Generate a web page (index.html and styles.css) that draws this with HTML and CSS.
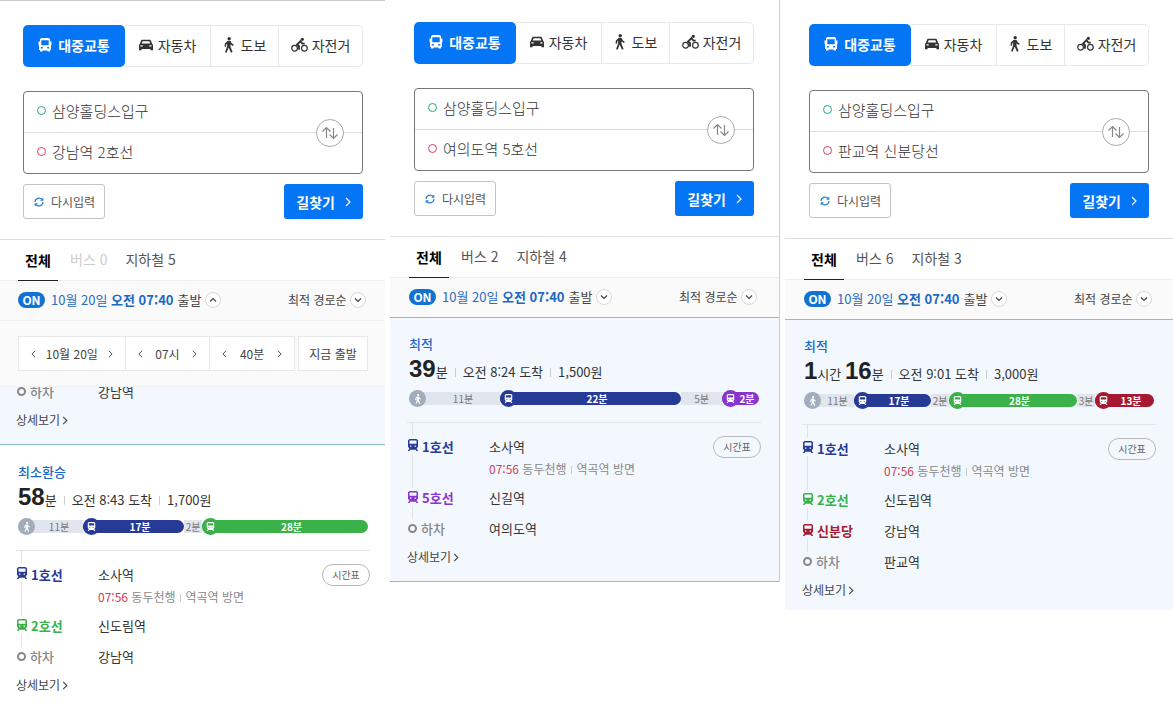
FILE: index.html
```html
<!DOCTYPE html>
<html lang="ko">
<head>
<meta charset="utf-8">
<meta name="viewport" content="width=device-width, initial-scale=1">
<title>길찾기</title>
<link rel="stylesheet" href="styles.css">
</head>
<body>
<svg class="sprite" aria-hidden="true">
  <symbol id="bus" viewBox="0 0 14 14"><path fill-rule="evenodd" d="M3.500 0h7L12 1v2.500h1.500V7H13v5h-1v1.500H9.500V12.500h-5v1H2V12H1V7H.5V3.500H2V1zM3.300 2.300V7.300h7.400V2.300zM2.800 9v1.500h2V9zm6.400 0v1.500h2V9z"/></symbol>
  <symbol id="car" viewBox="0 0 16 14"><path fill-rule="evenodd" d="M4 1h8c1 0 1.500.4 1.800 1.300L15 5.500c.7.500 1 1 1 2V13h-3v-1.500H3V13H0V7.500c0-1 .3-1.500 1-2l1.200-3.200C2.500 1.400 3 1 4 1zm.2 1.600L3.100 5.400h9.800l-1.100-2.800zM1.600 7.300v1.500h2.600V7.300zm10.200 0v1.500h2.600V7.300z"/></symbol>
  <symbol id="walk" viewBox="0 0 12 16"><circle cx="6.200" cy="1.700" r="1.700"/><path d="M4.500 4h3l1.200 2.300 2.100 1.400-.8 1.200-2.400-1.500-.2 2 2.200 5.600-1.600.8L5.600 10.600 3.700 15.700l-1.600-.7 2-5.400.1-3.100-.9.900-.3 2.300-1.500-.2.400-3z"/></symbol>
  <symbol id="bike" viewBox="0 0 18 16"><g fill="none" stroke="currentColor" stroke-width="1.300"><circle cx="3.800" cy="11.500" r="3"/><circle cx="14.200" cy="11.500" r="3"/><path d="M8.500 13V9.300L6.500 7.400 10 4l2 2.500h2.500" stroke-width="2"/></g><circle cx="12" cy="2" r="1.700"/></symbol>
  <symbol id="train" viewBox="0 0 12 12"><path fill-rule="evenodd" d="M2.500 0h7L11 1.200v6.600L9.800 9.200h-.3L11.200 12H9.500l-.8-1.300H3.300L2.500 12H.8l1.700-2.800h-.3L1 7.800V1.200zM2.500 1.500v3.300h7V1.500zM3 6.600v1.200h1.400V6.600zm4.600 0v1.200H9V6.600z"/></symbol>
  <symbol id="swap" viewBox="0 0 18 14"><path fill="none" stroke="currentColor" stroke-width="1.200" d="M5.500 12V1.500M1.500 5.500l4-4 4 4M12.500 2v10.500M8.500 8.500l4 4 4-4"/></symbol>
  <symbol id="refresh" viewBox="0 0 10 10"><path fill="none" stroke="currentColor" stroke-width="1.200" d="M1 5a4 4 0 0 1 7-2.500M9 5a4 4 0 0 1-7 2.500"/><path d="M9.300.5v3.200H6.100zM.7 9.500V6.300h3.200z"/></symbol>
  <symbol id="right" viewBox="0 0 6 10"><path fill="none" stroke="currentColor" stroke-width="1.200" d="M1 1l4 4-4 4"/></symbol>
  <symbol id="left" viewBox="0 0 6 10"><path fill="none" stroke="currentColor" stroke-width="1.200" d="M5 1L1 5l4 4"/></symbol>
  <symbol id="down" viewBox="0 0 16 16"><circle cx="8" cy="8" r="7.500" fill="#fff" stroke="#d8d8d8"/><path fill="none" stroke="currentColor" stroke-width="1.200" d="M5 6.500l3 3 3-3"/></symbol>
  <symbol id="up" viewBox="0 0 16 16"><circle cx="8" cy="8" r="7.500" fill="#fff" stroke="#d8d8d8"/><path fill="none" stroke="currentColor" stroke-width="1.200" d="M5 9.500l3-3 3 3"/></symbol>
</svg>
<main class="page">

<section class="panel panel-first">
  <form class="search">
    <nav class="modes">
      <button type="button" class="mode mode-transit"><svg class="i14"><use href="#bus"/></svg>대중교통</button>
      <button type="button" class="mode mode-car"><svg class="i14"><use href="#car"/></svg>자동차</button>
      <button type="button" class="mode mode-walk"><svg class="i-walk"><use href="#walk"/></svg>도보</button>
      <button type="button" class="mode mode-bike"><svg class="i-bike"><use href="#bike"/></svg>자전거</button>
    </nav>
    <div class="places">
      <label class="place from"><i class="dot"></i><input aria-label="출발지" value="삼양홀딩스입구"></label>
      <label class="place to"><i class="dot"></i><input aria-label="도착지" value="강남역 2호선"></label>
      <button type="button" class="swap" aria-label="출발 도착 바꾸기"><svg><use href="#swap"/></svg></button>
    </div>
    <div class="actions">
      <button type="reset" class="reset"><svg><use href="#refresh"/></svg>다시입력</button>
      <button type="button" class="go">길찾기<svg><use href="#right"/></svg></button>
    </div>
  </form>
  <nav class="tabs"><button class="tab on">전체</button><button class="tab none" disabled>버스 0</button><button class="tab">지하철 5</button></nav>
  <div class="options">
    <button class="when"><span class="pill">ON</span><span class="date">10월 20일 <b>오전 07:40</b></span><span>출발</span><svg><use href="#up"/></svg></button>
    <label class="sort"><select aria-label="정렬"><option>최적 경로순</option></select><svg><use href="#down"/></svg></label>
  </div>
  <div class="picker">
    <div class="fields">
      <div class="field"><button aria-label="이전 날"><svg><use href="#left"/></svg></button><span>10월 20일</span><button aria-label="다음 날"><svg><use href="#right"/></svg></button></div>
      <div class="field"><button aria-label="이전 시"><svg><use href="#left"/></svg></button><span>07시</span><button aria-label="다음 시"><svg><use href="#right"/></svg></button></div>
      <div class="field"><button aria-label="이전 분"><svg><use href="#left"/></svg></button><span>40분</span><button aria-label="다음 분"><svg><use href="#right"/></svg></button></div>
    </div>
    <button class="now">지금 출발</button>
  </div>
  <article class="card chosen scrolled">
    <ul class="steps">
      <li class="step off"><div class="rail"><i class="stop"></i></div><b class="line">하차</b><div class="station"><span>강남역</span></div></li>
    </ul>
    <a class="detail" href="#">상세보기<svg><use href="#right"/></svg></a>
  </article>
  <article class="card">
    <h2 class="kind">최소환승</h2>
    <p class="sum"><span class="time"><b>58</b>분</span><span class="fact">오전 8:43 도착</span><span class="fact">1,700원</span></p>
    <div class="bar">
      <span class="seg foot" style="flex-grow:65"><i><svg><use href="#walk"/></svg></i><em>11분</em></span>
      <span class="seg ride l1" style="flex-grow:101"><i><svg><use href="#train"/></svg></i><em>17분</em></span>
      <span class="seg foot" style="flex-grow:18"><em>2분</em></span>
      <span class="seg ride l2" style="flex-grow:166"><i><svg><use href="#train"/></svg></i><em>28분</em></span>
    </div>
    <ul class="steps ruled">
      <li class="step l1"><div class="rail"><svg><use href="#train"/></svg></div><b class="line">1호선</b><div class="station"><span>소사역</span><p class="next"><time>07:56</time> 동두천행<span class="way">역곡역 방면</span></p></div><button class="table">시간표</button></li>
      <li class="step l2"><div class="rail"><svg><use href="#train"/></svg></div><b class="line">2호선</b><div class="station"><span>신도림역</span></div></li>
      <li class="step off"><div class="rail"><i class="stop"></i></div><b class="line">하차</b><div class="station"><span>강남역</span></div></li>
    </ul>
    <a class="detail" href="#">상세보기<svg><use href="#right"/></svg></a>
  </article>
</section>

<section class="panel panel-second">
  <form class="search">
    <nav class="modes">
      <button type="button" class="mode mode-transit"><svg class="i14"><use href="#bus"/></svg>대중교통</button>
      <button type="button" class="mode mode-car"><svg class="i14"><use href="#car"/></svg>자동차</button>
      <button type="button" class="mode mode-walk"><svg class="i-walk"><use href="#walk"/></svg>도보</button>
      <button type="button" class="mode mode-bike"><svg class="i-bike"><use href="#bike"/></svg>자전거</button>
    </nav>
    <div class="places">
      <label class="place from"><i class="dot"></i><input aria-label="출발지" value="삼양홀딩스입구"></label>
      <label class="place to"><i class="dot"></i><input aria-label="도착지" value="여의도역 5호선"></label>
      <button type="button" class="swap" aria-label="출발 도착 바꾸기"><svg><use href="#swap"/></svg></button>
    </div>
    <div class="actions">
      <button type="reset" class="reset"><svg><use href="#refresh"/></svg>다시입력</button>
      <button type="button" class="go">길찾기<svg><use href="#right"/></svg></button>
    </div>
  </form>
  <nav class="tabs"><button class="tab on">전체</button><button class="tab">버스 2</button><button class="tab">지하철 4</button></nav>
  <div class="options">
    <button class="when"><span class="pill">ON</span><span class="date">10월 20일 <b>오전 07:40</b></span><span>출발</span><svg><use href="#down"/></svg></button>
    <label class="sort"><select aria-label="정렬"><option>최적 경로순</option></select><svg><use href="#down"/></svg></label>
  </div>
  <article class="card chosen">
    <h2 class="kind">최적</h2>
    <p class="sum"><span class="time"><b>39</b>분</span><span class="fact">오전 8:24 도착</span><span class="fact">1,500원</span></p>
    <div class="bar">
      <span class="seg foot" style="flex-grow:91"><i><svg><use href="#walk"/></svg></i><em>11분</em></span>
      <span class="seg ride l1" style="flex-grow:181"><i><svg><use href="#train"/></svg></i><em>22분</em></span>
      <span class="seg foot" style="flex-grow:41"><em>5분</em></span>
      <span class="seg ride l5" style="flex-grow:37"><i><svg><use href="#train"/></svg></i><em>2분</em></span>
    </div>
    <ul class="steps ruled">
      <li class="step l1"><div class="rail"><svg><use href="#train"/></svg></div><b class="line">1호선</b><div class="station"><span>소사역</span><p class="next"><time>07:56</time> 동두천행<span class="way">역곡역 방면</span></p></div><button class="table">시간표</button></li>
      <li class="step l5"><div class="rail"><svg><use href="#train"/></svg></div><b class="line">5호선</b><div class="station"><span>신길역</span></div></li>
      <li class="step off"><div class="rail"><i class="stop"></i></div><b class="line">하차</b><div class="station"><span>여의도역</span></div></li>
    </ul>
    <a class="detail" href="#">상세보기<svg><use href="#right"/></svg></a>
  </article>
</section>

<section class="panel panel-third">
  <form class="search">
    <nav class="modes">
      <button type="button" class="mode mode-transit"><svg class="i14"><use href="#bus"/></svg>대중교통</button>
      <button type="button" class="mode mode-car"><svg class="i14"><use href="#car"/></svg>자동차</button>
      <button type="button" class="mode mode-walk"><svg class="i-walk"><use href="#walk"/></svg>도보</button>
      <button type="button" class="mode mode-bike"><svg class="i-bike"><use href="#bike"/></svg>자전거</button>
    </nav>
    <div class="places">
      <label class="place from"><i class="dot"></i><input aria-label="출발지" value="삼양홀딩스입구"></label>
      <label class="place to"><i class="dot"></i><input aria-label="도착지" value="판교역 신분당선"></label>
      <button type="button" class="swap" aria-label="출발 도착 바꾸기"><svg><use href="#swap"/></svg></button>
    </div>
    <div class="actions">
      <button type="reset" class="reset"><svg><use href="#refresh"/></svg>다시입력</button>
      <button type="button" class="go">길찾기<svg><use href="#right"/></svg></button>
    </div>
  </form>
  <nav class="tabs"><button class="tab on">전체</button><button class="tab">버스 6</button><button class="tab">지하철 3</button></nav>
  <div class="options">
    <button class="when"><span class="pill">ON</span><span class="date">10월 20일 <b>오전 07:40</b></span><span>출발</span><svg><use href="#down"/></svg></button>
    <label class="sort"><select aria-label="정렬"><option>최적 경로순</option></select><svg><use href="#down"/></svg></label>
  </div>
  <article class="card chosen">
    <h2 class="kind">최적</h2>
    <p class="sum"><span class="time"><b>1</b>시간 <b>16</b>분</span><span class="fact">오전 9:01 도착</span><span class="fact">3,000원</span></p>
    <div class="bar">
      <span class="seg foot" style="flex-grow:50"><i><svg><use href="#walk"/></svg></i><em>11분</em></span>
      <span class="seg ride l1" style="flex-grow:77"><i><svg><use href="#train"/></svg></i><em>17분</em></span>
      <span class="seg foot" style="flex-grow:18"><em>2분</em></span>
      <span class="seg ride l2" style="flex-grow:128"><i><svg><use href="#train"/></svg></i><em>28분</em></span>
      <span class="seg foot" style="flex-grow:18"><em>3분</em></span>
      <span class="seg ride sb" style="flex-grow:59"><i><svg><use href="#train"/></svg></i><em>13분</em></span>
    </div>
    <ul class="steps ruled">
      <li class="step l1"><div class="rail"><svg><use href="#train"/></svg></div><b class="line">1호선</b><div class="station"><span>소사역</span><p class="next"><time>07:56</time> 동두천행<span class="way">역곡역 방면</span></p></div><button class="table">시간표</button></li>
      <li class="step l2"><div class="rail"><svg><use href="#train"/></svg></div><b class="line">2호선</b><div class="station"><span>신도림역</span></div></li>
      <li class="step sb"><div class="rail"><svg><use href="#train"/></svg></div><b class="line">신분당</b><div class="station"><span>강남역</span></div></li>
      <li class="step off"><div class="rail"><i class="stop"></i></div><b class="line">하차</b><div class="station"><span>판교역</span></div></li>
    </ul>
    <a class="detail" href="#">상세보기<svg><use href="#right"/></svg></a>
  </article>
</section>
</main>
</body>
</html>
```
FILE: styles.css
```css
*, *::before, *::after { box-sizing: border-box; }

body {
  margin: 0;
  background: #fff;
  color: #333;
  font: 13px/20px "Noto Sans CJK KR", "Noto Sans", sans-serif;
}

button, input, select {
  margin: 0;
  padding: 0;
  border: 0;
  background: none;
  color: inherit;
  font: inherit;
}

p, h2, ul { margin: 0; padding: 0; }
ul { list-style: none; }
em, i { font-style: normal; }
svg { display: block; flex: none; fill: currentColor; }
.sprite { display: none; }

.page {
  display: grid;
  grid-template-columns: 385fr 390fr 388fr;
  column-gap: 5px;
  align-items: start;
}

.panel { --left: 17px; --right: 17px; }
.panel-first { --left: 16px; --right: 15px; border-top: 1px solid #ccc; padding-top: 24px; }
.panel-second { --right: 18px; border-right: 1px solid #ccc; padding-top: 22px; }
.panel-third { padding-top: 24px; }

/* Search form */
.search { padding: 0 calc(var(--right) + 7px) 20px calc(var(--left) + 7px); }

.modes {
  display: grid;
  grid-template-columns: 102fr 86fr 68fr 84fr;
  height: 42px;
  font-size: 14px;
}
.mode {
  display: flex;
  align-items: center;
  justify-content: center;
  gap: 5px;
  padding-bottom: 2px;
  border: solid #e8e8e8;
  border-width: 1px 1px 1px 0;
  white-space: nowrap;
}
.mode-transit { gap: 6px; border: 0; border-radius: 5px; background: #0475f4; color: #fff; font-weight: 700; }
.mode-walk { gap: 6px; }
.mode-bike { gap: 4px; border-radius: 0 5px 5px 0; }
.i14 { width: 14px; height: 14px; }
.i-walk { width: 12px; height: 16px; }
.i-bike { width: 17px; height: 16px; }

.places {
  position: relative;
  margin-top: 24px;
  border: 1px solid #777;
  border-radius: 4px;
}
.place { display: flex; align-items: center; gap: 6px; height: 40px; padding: 0 0 3px 13px; }
.place.to { height: 41px; border-top: 1px solid #ddd; }
.place input { flex: 1; min-width: 0; height: 24px; font-size: 15px; font-weight: 300; outline: 0; }
.dot { width: 9px; height: 9px; border: 1px solid #1fae6b; border-radius: 50%; }
.to .dot { border-color: #d9415c; }
.swap {
  position: absolute;
  top: calc(50% - 14px);
  right: 18px;
  display: grid;
  place-items: center;
  width: 28px;
  height: 28px;
  border: 1px solid #aaa;
  border-radius: 50%;
  background: #fff;
  color: #888;
}
.swap svg { width: 18px; height: 14px; }

.actions { display: flex; justify-content: space-between; margin-top: 10px; }
.reset, .go { display: flex; align-items: center; height: 35px; border-radius: 3px; }
.reset { gap: 7px; padding: 0 9px 0 10px; border: 1px solid #c4c4c4; color: #555; font-size: 12px; }
.reset svg { width: 10px; height: 10px; color: #2a7fd4; }
.go { gap: 10px; padding: 0 12px; background: #0475f4; color: #fff; font-size: 14px; font-weight: 700; }
.go svg { width: 6px; height: 10px; }

/* Result filters */
.tabs {
  display: flex;
  height: 42px;
  padding-left: calc(var(--left) + 2px);
  border-top: 1px solid #ddd;
  border-bottom: 1px solid #eee;
  font-size: 14px;
}
.tab { height: 41px; margin-right: 18px; padding-bottom: 4px; color: #555; }
.tab.on { width: 40px; margin-right: 12px; padding-bottom: 0; border-bottom: 1px solid #222; color: #000; font-weight: 700; }
.tab.none { color: #ccc; }

.options {
  display: flex;
  align-items: center;
  justify-content: space-between;
  height: 39px;
  padding: 0 calc(var(--right) + 4px) 2px calc(var(--left) + 2px);
  background: #fafafa;
}
.when, .sort { display: flex; align-items: center; gap: 4px; color: #444; }
.when svg, .sort svg { width: 16px; height: 16px; }
.pill {
  width: 27px;
  margin-right: 2px;
  border-radius: 8px;
  background: #1272d3;
  color: #fff;
  font-size: 12px;
  font-weight: 700;
  line-height: 16px;
}
.date { color: #2b6cc4; }
.date b { color: #1b68c5; }
.sort select { appearance: none; font-size: 12px; }

/* Departure time picker */
.picker {
  position: relative;
  display: grid;
  grid-template-columns: 277fr 70fr;
  gap: 3px;
  padding: 15px calc(var(--right) + 2px) 15px calc(var(--left) + 2px);
  border-top: 1px solid #eee;
  border-bottom: 1px solid #f0f0f0;
  background: #fafafa;
  color: #444;
  font-size: 12px;
}
.fields { display: grid; grid-template-columns: 106fr 85fr 85fr; border: 1px solid #e8e8e8; background: #fff; }
.field { display: flex; align-items: center; justify-content: space-between; height: 33px; padding: 0 12px; }
.field + .field { border-left: 1px solid #e8e8e8; }
.field svg { width: 5px; height: 8px; }
.now { border: 1px solid #e8e8e8; background: #fff; }

/* Route cards */
.card { padding: 16px var(--right) 0 var(--left); border-top: 1px solid transparent; }
.chosen { border-top-color: #8fbccb; background: #f3f8fe; padding-bottom: 16px; }
.panel-second .chosen { border-bottom: 1px solid #8fbccb; }
.panel-third .chosen { padding-bottom: 12px; }
.scrolled { margin-top: -5px; padding-top: 0; border-top: 0; border-bottom: 1px solid #8fbccb; }

.kind { margin-left: 2px; color: #1b68c5; font-size: 13px; font-weight: 500; line-height: 20px; }
.sum { display: flex; align-items: baseline; height: 30px; margin-left: 2px; line-height: 30px; }
.time b { font: 700 24px/30px "Liberation Sans", sans-serif; color: #222; }
.fact::before { content: ""; display: inline-block; width: 1px; height: 9px; margin: 0 7px; background: #ccc; }

.bar { display: flex; align-items: center; height: 17px; margin: 6px 2px 0; font-size: 10px; line-height: 13px; }
.seg { display: flex; flex: 0 1 0; align-items: center; min-width: 0; height: 13px; background: #e1e5ed; color: #777; white-space: nowrap; }
.seg i { display: grid; flex: none; place-items: center; width: 17px; height: 17px; border-radius: 50%; background: #a1adbb; color: #fff; }
.seg em { flex: 1; text-align: center; }
.foot:first-child { border-radius: 7px 0 0 7px; }
.foot svg { width: 8px; height: 10px; }
.ride { border-radius: 7px; background: var(--line); color: #fff; font-weight: 700; }
.ride i { background: var(--line); }
.ride em { padding-right: 4px; }
.ride svg { width: 9px; height: 9px; }

.l1 { --line: #263a96; }
.l2 { --line: #3bb149; }
.l5 { --line: #8a35cf; }
.sb { --line: #a71930; }
.off { --line: #888; }

.ruled { margin-top: 15px; border-top: 1px solid #e1e5ea; }
.step { display: grid; grid-template-columns: 11px 71px 1fr auto; }
.ruled .step:first-child > * { padding-top: 14px; }
.rail { display: flex; flex-direction: column; align-items: center; color: var(--line); }
.rail svg { width: 12px; height: 12px; margin: 3px 0; }
.rail::after { content: ""; flex: 1; width: 1px; background: #dfe3e8; }
.ruled .step:first-child .rail { padding-top: 0; }
.ruled .step:first-child .rail::before { content: ""; width: 1px; height: 13px; background: #dfe3e8; }
.off .rail::after { display: none; }
.stop { width: 9px; height: 9px; margin-top: 5px; border: 2px solid #888; border-radius: 50%; }
.line { padding-left: 4px; color: var(--line); font-weight: 700; }
.off .line { padding-left: 3px; font-weight: 500; }
.station { padding-bottom: 11px; color: #333; }
.off .station { padding-bottom: 10px; }
.next { margin-top: 4px; color: #888; font-size: 12px; line-height: 16px; }
.next time { color: #d23c50; }
.way::before { content: ""; display: inline-block; width: 1px; height: 8px; margin: 0 5px 0 4px; background: #ccc; }
.step:first-child > .table {
  align-self: start;
  width: 48px;
  height: 22px;
  margin-top: 13px;
  padding: 0;
  border: 1px solid #b8b8b8;
  border-radius: 11px;
  color: #666;
  font-size: 10px;
  line-height: 20px;
}
.detail { display: flex; align-items: center; width: fit-content; gap: 2px; color: #444; font-size: 12px; line-height: 16px; text-decoration: none; }
.detail svg { width: 6px; height: 9px; }
```
